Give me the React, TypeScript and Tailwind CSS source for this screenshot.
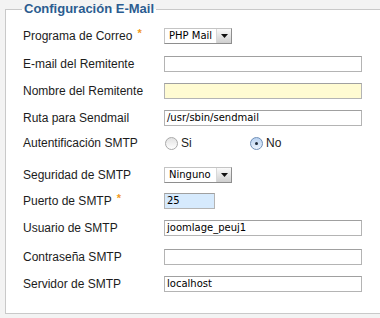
const labelFont = { fontFamily: '"Liberation Sans", Arial, sans-serif' }

function Req() {
  return <span className="relative -top-[3px] ml-[5px] text-[11px] font-bold text-[#f29a1c]">*</span>
}

function TextInput({ value = '', className = 'w-[198px]' }: { value?: string; className?: string }) {
  return (
    <div
      className={`flex h-[16px] items-center border border-[#b4b4b4] border-t-[#a0a0a0] pl-[2px] text-[10px] leading-none text-black ${className}`}
      style={{ fontFamily: '"DejaVu Sans", "Lucida Grande", sans-serif' }}
    >
      {value}
    </div>
  )
}

function Select({ value }: { value: string }) {
  return (
    <div
      className="flex h-[16px] w-[68px] items-stretch border border-[#c4c4c4] border-b-[#8e8e8e] border-r-[#8e8e8e] bg-white text-[10px] leading-none text-black"
      style={{ fontFamily: '"DejaVu Sans", "Lucida Grande", sans-serif' }}
    >
      <div className="flex flex-1 items-center pl-[4px]">{value}</div>
      <div className="flex w-[15px] items-center justify-center border-l border-[#d8d8d8] bg-gradient-to-b from-[#fafafa] to-[#cfcfcf]">
        <svg width="7" height="4" viewBox="0 0 7 4">
          <path d="M0 0h7L3.5 4z" fill="#111" />
        </svg>
      </div>
    </div>
  )
}

function Radio({ checked }: { checked?: boolean }) {
  return (
    <div
      className={`flex h-[13px] w-[13px] items-center justify-center rounded-full border ${
        checked
          ? 'border-[#6f8fb8] bg-gradient-to-b from-[#b9d2f0] to-[#eaf2fc]'
          : 'border-[#a9a9a9] bg-gradient-to-b from-[#e2e2e2] to-[#ffffff]'
      }`}
    >
      {checked && <div className="h-[3px] w-[3px] rounded-full bg-[#1d2a3a]" />}
    </div>
  )
}

function Row({ label, req, mt, children }: { label: string; req?: boolean; mt: string; children: React.ReactNode }) {
  return (
    <div className={`flex h-[16px] items-center ${mt}`}>
      <div className="w-[141px] text-[12px] leading-none text-[#1c1c1c]" style={labelFont}>
        {label}
        {req && <Req />}
      </div>
      {children}
    </div>
  )
}

export default function App() {
  return (
    <div className="h-[318px] w-[380px] overflow-hidden bg-[#f3f3f3] pl-[5px] pt-[1px]">
      <fieldset className="w-[390px] border border-[#c9c9c9] bg-white pb-[21px] pl-[17px]">
        <legend
          className="-ml-[1px] px-[2px] text-[13px] font-bold leading-[16px] text-[#2b5c90]"
          style={labelFont}
        >
          Configuración E-Mail
        </legend>

        <Row label="Programa de Correo" req mt="mt-[11px]">
          <Select value="PHP Mail" />
        </Row>
        <Row label="E-mail del Remitente" mt="mt-[12px]">
          <TextInput />
        </Row>
        <Row label="Nombre del Remitente" mt="mt-[11px]">
          <TextInput className="w-[198px] bg-[#fffbd2]" />
        </Row>
        <Row label="Ruta para Sendmail" mt="mt-[11px]">
          <TextInput value="/usr/sbin/sendmail" />
        </Row>
        <Row label="Autentificación SMTP" mt="mt-[9px]">
          <div className="flex items-center text-[12px] leading-none text-[#1c1c1c]" style={labelFont}>
            <div className="flex w-[86px] items-center gap-[3px] pl-[1px]">
              <Radio />
              <span>Si</span>
            </div>
            <div className="flex items-center gap-[3px]">
              <Radio checked />
              <span>No</span>
            </div>
          </div>
        </Row>
        <Row label="Seguridad de SMTP" mt="mt-[16px]">
          <Select value="Ninguno" />
        </Row>
        <Row label="Puerto de SMTP" req mt="mt-[10px]">
          <TextInput value="25" className="w-[51px] bg-[#d6eafd]" />
        </Row>
        <Row label="Usuario de SMTP" mt="mt-[11px]">
          <TextInput value="joomlage_peuj1" />
        </Row>
        <Row label="Contraseña SMTP" mt="mt-[13px]">
          <TextInput />
        </Row>
        <Row label="Servidor de SMTP" mt="mt-[11px]">
          <TextInput value="localhost" />
        </Row>
      </fieldset>
    </div>
  )
}
